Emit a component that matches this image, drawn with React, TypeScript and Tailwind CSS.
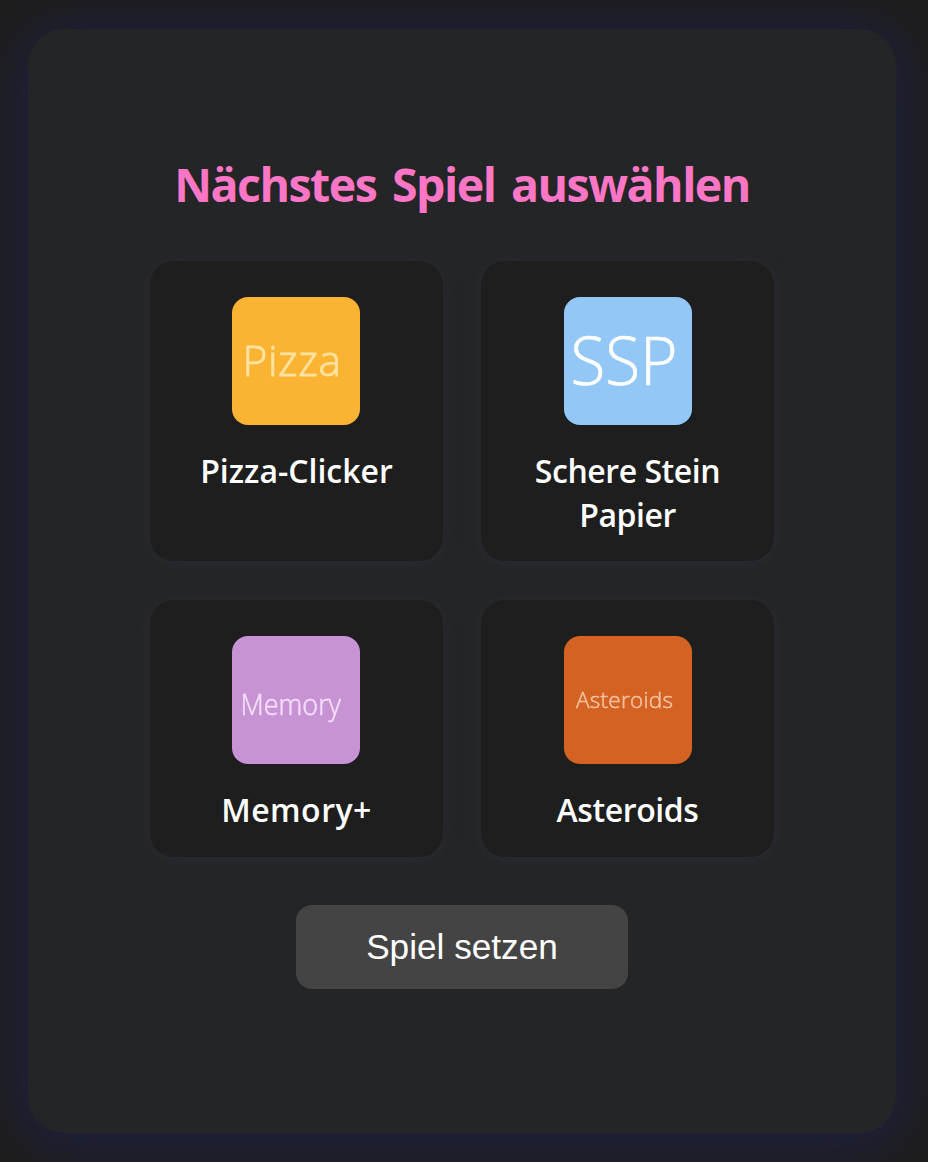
type Game = {
  name: string;
  label: string;
  tile: string;
  tracking: string;
  x: number;
  baseline: number;
  size: number;
  width: number;
  adjust: "spacing" | "spacingAndGlyphs";
  stroke: number;
};

const games: Game[] = [
  {
    name: "Pizza-Clicker",
    label: "Pizza",
    tile: "-ml-px bg-[#fbb333] text-[#ffe3a0]",
    tracking: "tracking-normal",
    x: 10.5,
    baseline: 79,
    size: 42.5,
    width: 98.5,
    adjust: "spacing",
    stroke: 0.8,
  },
  {
    name: "Schere Stein Papier",
    label: "SSP",
    tile: "bg-[#93c8f6] text-white",
    tracking: "tracking-[-0.45px]",
    x: 6.5,
    baseline: 87.5,
    size: 66.5,
    width: 107,
    adjust: "spacingAndGlyphs",
    stroke: 0.6,
  },
  {
    name: "Memory+",
    label: "Memory",
    tile: "-ml-px bg-[#c893d5] text-[#f3dff7]",
    tracking: "tracking-[0.5px]",
    x: 8.5,
    baseline: 79,
    size: 29.5,
    width: 100.5,
    adjust: "spacingAndGlyphs",
    stroke: 0.5,
  },
  {
    name: "Asteroids",
    label: "Asteroids",
    tile: "bg-[#d36223] text-[#f5c3a2]",
    tracking: "tracking-[-0.4px]",
    x: 12,
    baseline: 72,
    size: 22.5,
    width: 97,
    adjust: "spacing",
    stroke: 0.5,
  },
];

function Thumbnail({ game }: { game: Game }) {
  return (
    <svg width="128" height="128" className={`shrink-0 rounded-2xl ${game.tile}`}>
      <text
        x={game.x}
        y={game.baseline}
        fontSize={game.size}
        textLength={game.width}
        lengthAdjust={game.adjust}
        fill="currentColor"
        stroke="currentColor"
        strokeWidth={game.stroke}
        className="font-light blur-[0.5px]"
      >
        {game.label}
      </text>
    </svg>
  );
}

export default function App() {
  return (
    <main className="h-[1162px] w-[928px] overflow-hidden bg-[#1e1e1e] pl-7 pt-[29px] font-['Open_Sans','Noto_Sans',sans-serif] text-white">
      <section className="flex h-[1104px] w-[868px] flex-col items-center rounded-[36px] bg-[#242526] pt-[124px] shadow-[0_6px_48px_6px_#1e2040]">
        <h1 className="whitespace-nowrap text-[46.5px] leading-[62px] font-bold tracking-[-1.5px] text-[#fb76c5] [word-spacing:5px]">
          Nächstes Spiel auswählen
        </h1>
        <div className="mt-[46px] grid grid-cols-[293px_293px] grid-rows-[300px_257px] gap-x-[38px] gap-y-[39px]">
          {games.map((game) => (
            <article key={game.name} className="flex flex-col items-center rounded-[24px] bg-[#1e1e1e] px-9 pt-9 shadow-[0_2px_16px_#2b2c36]">
              <Thumbnail game={game} />
              <h2 className={`mt-6 text-center text-[32px] leading-[44px] font-semibold ${game.tracking}`}>{game.name}</h2>
            </article>
          ))}
        </div>
        <button className="mt-12 h-[84px] w-[332px] rounded-2xl bg-[#444] font-['Liberation_Sans',Arial,sans-serif] text-[35.2px]">Spiel setzen</button>
      </section>
    </main>
  );
}
